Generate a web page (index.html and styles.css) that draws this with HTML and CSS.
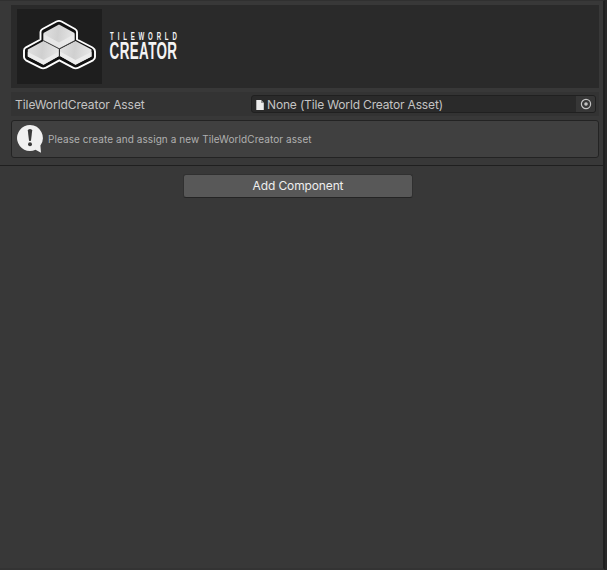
FILE: index.html
```html
<!DOCTYPE html>
<html lang="en">
<head>
<meta charset="utf-8">
<title>TileWorldCreator</title>
<link rel="stylesheet" href="styles.css">
</head>
<body>
<main class="inspector">
  <section class="component">
    <header class="banner">
      <div class="logo">
        <svg width="85" height="75" viewBox="17 9 85 75">
          <defs>
            <linearGradient id="tile" x1="0" x2="1" y1="0" y2="0.1">
              <stop offset="0" stop-color="#e2e2e2"/><stop offset=".5" stop-color="#d0d0d0"/><stop offset="1" stop-color="#e6e6e6"/>
            </linearGradient>
          </defs>
          <path d="M56.500 21.500Q59 20.300 61.500 21.500L75 29Q77 30.200 77 32V39.500L92.500 47.500Q95 49 95 51.500V57Q95 59 93 60.300L78.500 67.700Q75.500 69 73 67.700L59.300 60.300L46 67.700Q43 69 40.500 67.700L26 60.300Q24 59 24 57V50.500Q24 48.500 26 47.300L40.500 39.500V32Q40.500 30.200 42.500 29Z" fill="#111" stroke="#fff" stroke-width="1.900" stroke-linejoin="round"/>
          <g fill="url(#tile)">
            <path d="M59 24.500L74.500 33V40.500L59.300 48.500L43.500 40.500V33Z"/>
            <path d="M43.500 41L59 49V56L43.500 64.700L27.800 56.500V49.500Z"/>
            <path d="M75.500 41L91.500 49.500V56.500L75.500 64.700L60 56V49Z"/>
          </g>
          <g fill="#ececec">
            <path d="M43.500 34L59 42.500L74.500 34V40.500L59.300 48.500L43.500 40.500Z" opacity=".75"/>
            <path d="M27.800 52L43.500 60L59 51.500V56L43.500 64.700L27.800 56.500Z"/>
            <path d="M60 51.500L75.500 60L91.500 52V56.500L75.500 64.700L60 56Z"/>
          </g>
          <path d="M43.500 40.500L59.300 48.800L75 40.500M59.300 48.800V57" fill="none" stroke="#444" stroke-width=".8"/>
        </svg>
      </div>
      <svg class="wordmark" width="74" height="36" viewBox="0 0 74 36">
        <text class="word-small" transform="translate(2.100 12.600) scale(.58 1)" textLength="115" lengthAdjust="spacing">TILEWORLD</text>
        <text class="word-large" transform="translate(1.600 31.900) scale(.56 1)" textLength="120.500" lengthAdjust="spacing">CREATOR</text>
      </svg>
    </header>
    <div class="property">
      <span class="label">TileWorldCreator Asset</span>
      <div class="field">
        <svg class="file" width="8" height="10" viewBox="0 0 8 10"><path d="M.3 0H5L7.800 3V10H.3Z" fill="#ececec"/><path d="M5 0V3H7.800Z" fill="#999"/></svg>
        <span class="value">None (Tile World Creator Asset)</span>
        <span class="picker"><svg width="12" height="12" viewBox="0 0 12 12"><circle cx="6" cy="6" r="4.600" fill="none" stroke="#c4c4c4" stroke-width="1.200"/><circle cx="6" cy="6" r="1.800" fill="#c4c4c4"/></svg></span>
      </div>
    </div>
    <div class="help">
      <svg class="alert" width="28" height="30" viewBox="0 0 28 30"><path d="M14 1A13 13 0 1 0 19.500 25.800L25 28.700L24.400 21.500A13 13 0 0 0 14 1Z" fill="#f0f0f0"/><path d="M11.800 6.500Q11.800 5 14 5T16.200 6.500L15 16.500Q14 17.500 13 16.500Z" fill="#383838"/><circle cx="14" cy="20.300" r="2" fill="#383838"/></svg>
      <span>Please create and assign a new TileWorldCreator asset</span>
    </div>
  </section>
  <button class="add">Add Component</button>
</main>
</body>
</html>
```
FILE: styles.css
```css
* { box-sizing: border-box; }
body {
  margin: 0;
  height: 570px;
  overflow: hidden;
  background: #282828;
  font: 12px/16px Inter, "Liberation Sans", sans-serif;
  color: #c4c4c4;
}
.inspector {
  width: 605px;
  height: 570px;
  display: flex;
  flex-direction: column;
  background: #383838;
  border-top: 1px solid #303030;
  border-right: 2px solid #202020;
  border-bottom: 2px solid #333;
}
.component {
  height: 165px;
  flex: none;
  padding: 4px 4px 0 11px;
  border-bottom: 1px solid #1f1f1f;
}
.banner {
  height: 83px;
  padding: 4px 6px;
  display: flex;
  background: #2a2a2a;
}
.logo { width: 85px; height: 75px; background: #1e1e1e; }
.logo svg { display: block; }
.wordmark { margin: 18px 0 0 6px; fill: #f4f4f4; }
.word-small { font: bold 10.5px "Liberation Sans", sans-serif; }
.word-large { font: bold 24px "Liberation Sans", sans-serif; }
.property {
  height: 24px;
  margin-top: 4px;
  padding: 0 3px 0 4px;
  display: flex;
  align-items: center;
  background: #333;
}
.label { width: 236px; padding-top: 2px; letter-spacing: -.06px; }
.field {
  flex: 1;
  height: 18px;
  display: flex;
  align-items: center;
  padding-left: 4px;
  background: #2a2a2a;
  border: 1px solid #202020;
  border-radius: 3px;
}
.file { margin-top: 1px; }
.value { flex: 1; margin-left: 3px; padding-top: 2px; letter-spacing: -.16px; }
.picker {
  width: 19px;
  height: 16px;
  display: flex;
  align-items: center;
  justify-content: center;
  background: #373737;
  border-radius: 0 2px 2px 0;
}
.help {
  height: 38px;
  margin-top: 4px;
  padding-left: 4px;
  display: flex;
  align-items: center;
  gap: 4px;
  background: #404040;
  border: 1px solid #232323;
  border-radius: 3px;
  font-size: 10px;
  letter-spacing: .075px;
  color: #b0b0b0;
}
.add {
  width: 230px;
  height: 24px;
  margin: 8px 0 0 183px;
  padding: 0;
  font: inherit;
  letter-spacing: -.13px;
  color: #eee;
  background: #585858;
  border: 1px solid #303030;
  border-bottom-color: #242424;
  border-radius: 3px;
}
```
